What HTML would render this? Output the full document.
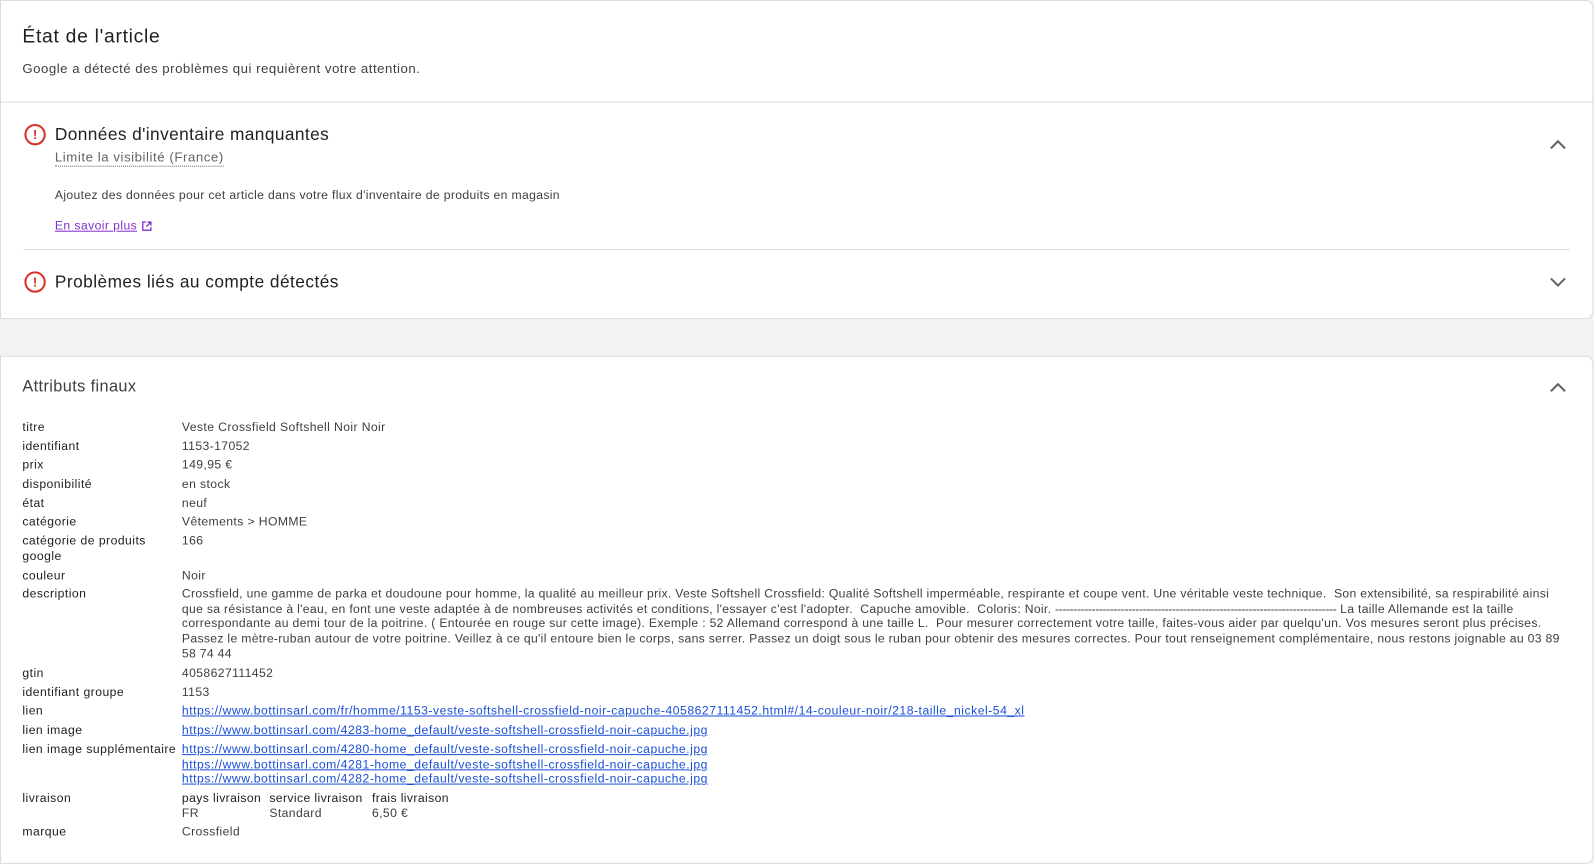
<!DOCTYPE html>
<html><head><meta charset="utf-8">
<style>
*{margin:0;padding:0;box-sizing:border-box}
body{width:1594px;height:838px;overflow:hidden;background:#f3f3f3;font-family:"Liberation Sans",Arial,sans-serif;color:#202124;position:relative}
#w{position:absolute;left:0;top:0;width:1568px;height:830px;transform:scale(1.0163);transform-origin:0 0}
.card{position:absolute;left:0;width:1568px;background:#fff;border:1px solid #dadce0;border-radius:0 8px 8px 0}
.a{position:absolute;white-space:nowrap}
.lab{position:absolute;left:22px;font-size:12px;line-height:15px;color:#202124;letter-spacing:0.45px}
.val{position:absolute;left:179px;font-size:12px;line-height:15px;color:#3c4043;white-space:nowrap;letter-spacing:0.38px}
.val a{color:#1a4fd6;text-decoration:underline;letter-spacing:0.5px}
.desc{letter-spacing:0.3px}
.desc div{line-height:14.7px}
.ic{position:absolute;left:23px;width:21px;height:21px;border:2px solid #d93025;border-radius:50%;color:#d93025;font-weight:bold;font-size:13px;text-align:center;line-height:17px}
.chev{position:absolute;left:1523px}
</style></head><body>
<div id="w">
<div class="card" style="top:0;height:314px;border-top:1px solid #dadce0">
  <div class="a" style="left:21px;top:25px;font-size:19px;color:#202124;letter-spacing:0.7px">État de l'article</div>
  <div class="a" style="left:21px;top:59px;font-size:13px;color:#3c4043;letter-spacing:0.5px">Google a détecté des problèmes qui requièrent votre attention.</div>
  <div style="position:absolute;left:0;right:0;top:99px;border-top:1px solid #dadce0"></div>
  <div class="ic" style="top:121px">!</div>
  <div class="a" style="left:53px;top:122px;font-size:17px;letter-spacing:0.4px">Données d'inventaire manquantes</div>
  <div class="a" style="left:53px;top:146px;font-size:13px;color:#5f6368;border-bottom:1px dotted #5f6368;padding-bottom:1px;letter-spacing:0.55px">Limite la visibilité (France)</div>
  <svg class="chev" style="top:134px" width="18" height="14" viewBox="0 0 18 14"><path d="M2 11 L9 4 L16 11" fill="none" stroke="#5f6368" stroke-width="2"/></svg>
  <div class="a" style="left:53px;top:184px;font-size:12px;color:#3c4043;letter-spacing:0.33px">Ajoutez des données pour cet article dans votre flux d'inventaire de produits en magasin</div>
  <div class="a" style="left:53px;top:214px;font-size:12px;color:#8430ce;text-decoration:underline;letter-spacing:0.4px">En savoir plus</div>
  <svg style="position:absolute;left:138px;top:216px" width="11" height="11" viewBox="0 0 11 11"><path d="M4.5 1.5H1.5V9.5H9.5V6.5M6 1.5H9.5V5M9.5 1.5L5 6" fill="none" stroke="#8430ce" stroke-width="1.3"/></svg>
  <div style="position:absolute;left:22px;width:1522px;top:244px;border-top:1px solid #dadce0"></div>
  <div class="ic" style="top:266px">!</div>
  <div class="a" style="left:53px;top:267px;font-size:17px;letter-spacing:0.45px">Problèmes liés au compte détectés</div>
  <svg class="chev" style="top:270px" width="18" height="14" viewBox="0 0 18 14"><path d="M2 3 L9 10 L16 3" fill="none" stroke="#5f6368" stroke-width="2"/></svg>
</div>
<div class="card" style="top:350px;height:500px">
  <div class="a" style="left:21px;top:21px;font-size:16px;color:#3c4043;letter-spacing:0.4px">Attributs finaux</div>
  <svg class="chev" style="top:23px" width="18" height="14" viewBox="0 0 18 14"><path d="M2 11 L9 4 L16 11" fill="none" stroke="#5f6368" stroke-width="2"/></svg>
</div>
<div class="lab" style="top:413px">titre</div><div class="val" style="top:413px">Veste Crossfield Softshell Noir Noir</div>
<div class="lab" style="top:432px">identifiant</div><div class="val" style="top:432px">1153-17052</div>
<div class="lab" style="top:450px">prix</div><div class="val" style="top:450px">149,95 €</div>
<div class="lab" style="top:469px">disponibilité</div><div class="val" style="top:469px">en stock</div>
<div class="lab" style="top:488px">état</div><div class="val" style="top:488px">neuf</div>
<div class="lab" style="top:506px">catégorie</div><div class="val" style="top:506px">Vêtements &gt; HOMME</div>
<div class="lab" style="top:525px">catégorie de produits<br>google</div><div class="val" style="top:525px">166</div>
<div class="lab" style="top:559px">couleur</div><div class="val" style="top:559px">Noir</div>
<div class="lab" style="top:577px">description</div>
<div class="val desc" style="top:577px">
<div>Crossfield, une gamme de parka et doudoune pour homme, la qualité au meilleur prix. Veste Softshell Crossfield: Qualité Softshell imperméable, respirante et coupe vent. Une véritable veste technique.&nbsp; Son extensibilité, sa respirabilité ainsi</div>
<div>que sa résistance à l'eau, en font une veste adaptée à de nombreuses activités et conditions, l'essayer c'est l'adopter.&nbsp; Capuche amovible.&nbsp; Coloris: Noir. <span style="letter-spacing:-0.4px">-----------------------------------------------------------------------------</span> La taille Allemande est la taille</div>
<div>correspondante au demi tour de la poitrine. ( Entourée en rouge sur cette image). Exemple : 52 Allemand correspond à une taille L.&nbsp; Pour mesurer correctement votre taille, faites-vous aider par quelqu'un. Vos mesures seront plus précises.</div>
<div>Passez le mètre-ruban autour de votre poitrine. Veillez à ce qu'il entoure bien le corps, sans serrer. Passez un doigt sous le ruban pour obtenir des mesures correctes. Pour tout renseignement complémentaire, nous restons joignable au 03 89</div>
<div>58 74 44</div>
</div>
<div class="lab" style="top:655px">gtin</div><div class="val" style="top:655px">4058627111452</div>
<div class="lab" style="top:674px">identifiant groupe</div><div class="val" style="top:674px">1153</div>
<div class="lab" style="top:692px">lien</div><div class="val" style="top:692px"><a>https://www.bottinsarl.com/fr/homme/1153-veste-softshell-crossfield-noir-capuche-4058627111452.html#/14-couleur-noir/218-taille_nickel-54_xl</a></div>
<div class="lab" style="top:711px">lien image</div><div class="val" style="top:711px"><a>https://www.bottinsarl.com/4283-home_default/veste-softshell-crossfield-noir-capuche.jpg</a></div>
<div class="lab" style="top:730px">lien image supplémentaire</div><div class="val" style="top:730px;line-height:14.7px"><a>https://www.bottinsarl.com/4280-home_default/veste-softshell-crossfield-noir-capuche.jpg</a><br><a>https://www.bottinsarl.com/4281-home_default/veste-softshell-crossfield-noir-capuche.jpg</a><br><a>https://www.bottinsarl.com/4282-home_default/veste-softshell-crossfield-noir-capuche.jpg</a></div>
<div class="lab" style="top:778px">livraison</div>
<div class="val" style="top:778px;color:#202124">pays livraison</div><div class="val" style="top:793px">FR</div>
<div class="val" style="top:778px;left:265px;color:#202124">service livraison</div><div class="val" style="top:793px;left:265px">Standard</div>
<div class="val" style="top:778px;left:366px;color:#202124">frais livraison</div><div class="val" style="top:793px;left:366px">6,50 €</div>
<div class="lab" style="top:811px">marque</div><div class="val" style="top:811px">Crossfield</div>
</div>
</body></html>
